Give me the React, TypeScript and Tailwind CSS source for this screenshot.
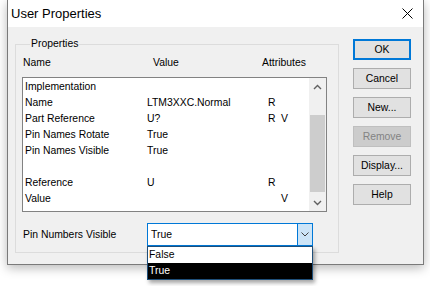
import React from 'react'

type Row = { name: string; value: string; r: string; v: string }

const rows: Row[] = [
  { name: 'Implementation', value: '', r: '', v: '' },
  { name: 'Name', value: 'LTM3XXC.Normal', r: 'R', v: '' },
  { name: 'Part Reference', value: 'U?', r: 'R', v: 'V' },
  { name: 'Pin Names Rotate', value: 'True', r: '', v: '' },
  { name: 'Pin Names Visible', value: 'True', r: '', v: '' },
  { name: '', value: '', r: '', v: '' },
  { name: 'Reference', value: 'U', r: 'R', v: '' },
  { name: 'Value', value: '', r: '', v: 'V' },
]

const buttons = ['OK', 'Cancel', 'New...', 'Remove', 'Display...', 'Help']

const Chevron = ({ up }: { up?: boolean }) => (
  <svg width="9" height="6" viewBox="0 0 9 6">
    <path
      d={up ? 'M1 5 L4.5 1.5 L8 5' : 'M1 1 L4.5 4.5 L8 1'}
      fill="none"
      stroke="#606060"
      strokeWidth="1.4"
    />
  </svg>
)

const App = () => {
  return (
    <div className="w-[430px] h-[286px] bg-white overflow-hidden font-['Liberation_Sans',Arial,sans-serif] text-[10.4px] text-black">
      <div className="ml-[7px] w-[417px] h-[265px] flex flex-col bg-[#f0f0f0] border-x border-b border-[#7a7a7a] shadow-[0_3px_10px_rgba(0,0,0,0.28)]">
        {/* title bar */}
        <div className="h-[27px] shrink-0 bg-white flex items-center justify-between pl-[3px] pr-[10px]">
          <span className="text-[13px] leading-none">User Properties</span>
          <svg width="11" height="11" viewBox="0 0 11 11">
            <path d="M0.5 0.5 L10.5 10.5 M10.5 0.5 L0.5 10.5" stroke="#000" strokeWidth="1" />
          </svg>
        </div>

        <div className="flex flex-1 pl-[7px]">
          <fieldset className="mt-[11px] w-[324px] h-[215px] border border-[#dcdcdc] px-[6px]">
            <legend className="ml-[8px] px-[1px] leading-[12px]">Properties</legend>

            <div className="flex h-[16px] items-center mt-[5px] pl-[1px]">
              <span className="w-[130px]">Name</span>
              <span className="w-[109px]">Value</span>
              <span>Attributes</span>
            </div>

            {/* list box */}
            <div className="mt-[6px] w-[305px] h-[135px] bg-white border border-[#828282] flex">
              <div className="flex-1 pt-[1px] pl-[2px]">
                {rows.map((row, i) => (
                  <div key={i} className="flex h-[16px] items-center whitespace-nowrap">
                    <span className="w-[122px]">{row.name}</span>
                    <span className="w-[121px]">{row.value}</span>
                    <span className="w-[13px]">{row.r}</span>
                    <span>{row.v}</span>
                  </div>
                ))}
              </div>
              <div className="w-[17px] bg-[#f0f0f0] flex flex-col">
                <div className="h-[17px] flex items-center justify-center">
                  <Chevron up />
                </div>
                <div className="flex-1 pt-[20px] pb-[2px] px-[1px]">
                  <div className="h-full bg-[#cdcdcd]" />
                </div>
                <div className="h-[17px] flex items-center justify-center">
                  <Chevron />
                </div>
              </div>
            </div>

            {/* combo row */}
            <div className="flex items-center mt-[11px] pl-[1px]">
              <span className="w-[124px]">Pin Numbers Visible</span>
              <div className="relative w-[166px] h-[23px] bg-white border border-[#0078d7] flex">
                <span className="flex-1 pl-[3px] flex items-center">True</span>
                <div className="w-[15px] bg-[#cce4f7] border-l border-[#0078d7] flex items-center justify-center">
                  <svg width="8" height="5" viewBox="0 0 8 5">
                    <path d="M0.5 0.5 L4 4 L7.5 0.5" fill="none" stroke="#404040" strokeWidth="1" />
                  </svg>
                </div>
                {/* open dropdown */}
                <div className="absolute left-[-1px] top-[22px] w-[166px] bg-white border border-[#1e4e79] shadow-[2px_3px_4px_rgba(0,0,0,0.35)] z-10">
                  <div className="h-[16px] pl-[1px] flex items-center">False</div>
                  <div className="h-[16px] pl-[1px] flex items-center bg-black text-white">True</div>
                </div>
              </div>
            </div>
          </fieldset>

          <div className="ml-[14px] mt-[12px] flex flex-col gap-[8px]">
            {buttons.map((label) => (
              <div
                key={label}
                className={
                  label === 'OK'
                    ? 'w-[58px] h-[21px] flex items-center justify-center bg-[#e1e1e1] border-2 border-[#0078d7]'
                    : label === 'Remove'
                      ? 'w-[58px] h-[21px] flex items-center justify-center bg-[#cccccc] border border-[#bfbfbf] text-[#838383]'
                      : 'w-[58px] h-[21px] flex items-center justify-center bg-[#e1e1e1] border border-[#adadad]'
                }
              >
                {label}
              </div>
            ))}
          </div>
        </div>
      </div>
    </div>
  )
}

export default App
